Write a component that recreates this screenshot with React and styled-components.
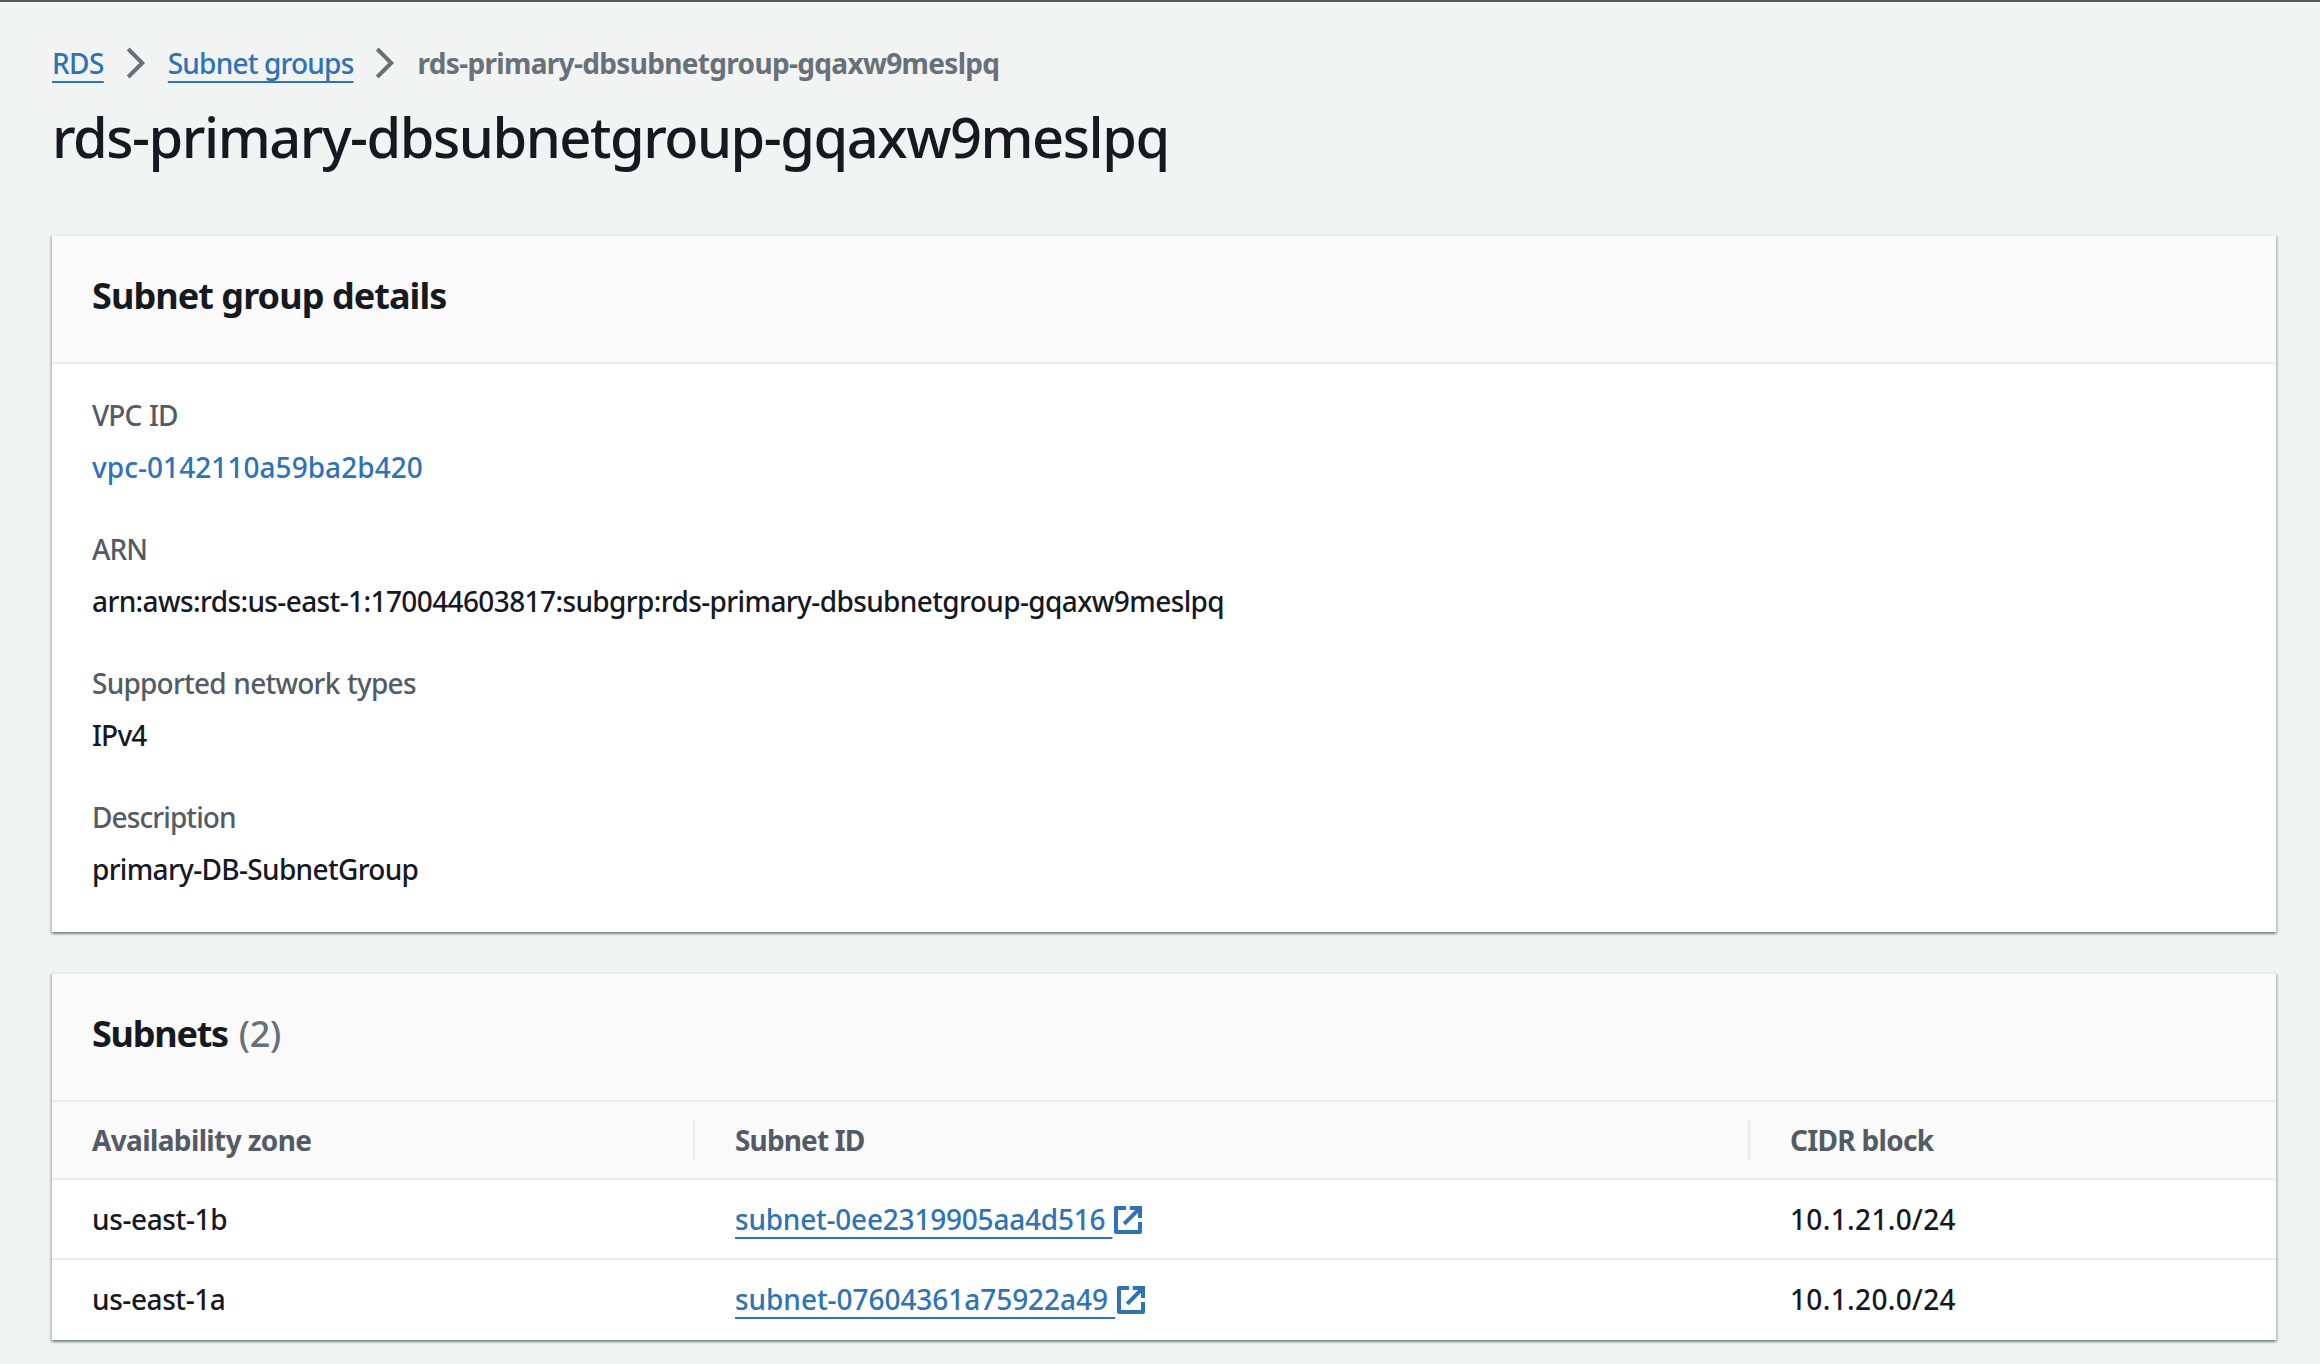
import React from 'react';
import styled, { createGlobalStyle } from 'styled-components';

const color = {
  page: '#f2f3f3',
  text: '#16191f',
  label: '#545b64',
  muted: '#687078',
  link: '#2e72b8',
  divider: '#eaeded',
  header: '#fafafa',
};

const GlobalStyle = createGlobalStyle`
  *, *::before, *::after { box-sizing: border-box; }
  body {
    margin: 0;
    background: ${color.page};
    color: ${color.text};
    font-family: "Noto Sans", "Open Sans", sans-serif;
    font-size: 28px;
    font-weight: 500;
    line-height: 44px;
  }
`;

const Page = styled.main`
  display: flex;
  flex-direction: column;
  min-height: 1364px;
  padding: 39px 44px 24px 52px;
  border-top: 2px solid #545b64;
`;

const Breadcrumbs = styled.nav`
  display: flex;
  align-items: center;
  gap: 16px;
  height: 44px;
  white-space: nowrap;
`;

const Link = styled.a`
  color: ${color.link};
  letter-spacing: ${(p) => p.$tracking || 0}px;
  text-decoration: ${(p) => (p.$plain ? 'none' : 'underline')};
  text-decoration-thickness: 2px;
  text-underline-offset: 7px;
  text-decoration-skip-ink: none;
`;

const Current = styled.span`
  color: ${color.muted};
  font-weight: 700;
  letter-spacing: -0.67px;
`;

const Icon = styled.svg`
  flex: none;
  width: 32px;
  height: 32px;
  fill: none;
  stroke: ${(p) => p.$color};
  stroke-width: 4;
`;

const ExternalIcon = styled(Icon)`
  margin-top: 2px;
`;

const Title = styled.h1`
  margin: 15px 0 62px;
  font-size: 56px;
  font-weight: 500;
  line-height: 72px;
  letter-spacing: -1.48px;
  white-space: nowrap;
`;

const Cards = styled.div`
  display: flex;
  flex-direction: column;
  gap: 40px;
`;

const Card = styled.section`
  width: 2224px;
  background: #fff;
  border-top: 2px solid ${color.divider};
  box-shadow:
    0 2px 2px 0 rgba(0, 28, 36, 0.3),
    2px 2px 2px 0 rgba(0, 28, 36, 0.15),
    -2px 2px 2px 0 rgba(0, 28, 36, 0.15);
`;

const CardHeader = styled.header`
  display: flex;
  align-items: baseline;
  gap: 11px;
  height: 128px;
  padding: 38px 40px 0;
  background: ${color.header};
  border-bottom: 2px solid ${color.divider};
`;

const Heading = styled.h2`
  margin: 0;
  font-size: 36px;
  font-weight: 700;
  line-height: 44px;
  letter-spacing: ${(p) => p.$tracking}px;
`;

const Count = styled.span`
  color: ${color.muted};
  font-size: 36px;
  line-height: 44px;
  letter-spacing: -0.3px;
`;

const Fields = styled.dl`
  display: flex;
  flex-direction: column;
  gap: 38px;
  margin: 0;
  padding: 29px 40px 41px;
`;

const Field = styled.div`
  display: flex;
  flex-direction: column;
  gap: 8px;
  align-items: flex-start;
`;

const Label = styled.dt`
  color: ${color.label};
  letter-spacing: ${(p) => p.$tracking}px;
  word-spacing: 1px;
`;

const Value = styled.dd`
  margin: 0;
  letter-spacing: ${(p) => p.$tracking}px;
`;

const Row = styled.div`
  display: grid;
  grid-template-columns: 643px 1055px 1fr;
  align-items: center;
  height: 80px;
  border-bottom: 2px solid ${(p) => (p.$last ? 'transparent' : color.divider)};
`;

const HeadRow = styled(Row)`
  height: 78px;
  background: ${color.header};
  color: ${color.label};
  font-weight: 700;
`;

const HeadCell = styled.div`
  display: flex;
  align-items: center;
  height: 40px;
  padding: 0 40px;
  letter-spacing: ${(p) => p.$tracking}px;
  border-right: ${(p) => (p.$last ? 'none' : `2px solid ${color.divider}`)};
`;

const Cell = styled.div`
  display: flex;
  align-items: center;
  padding: 0 40px;
  white-space: pre;
  letter-spacing: ${(p) => p.$tracking || 0}px;
`;

const Chevron = () => (
  <Icon viewBox="0 0 32 32" $color={color.muted} aria-hidden="true">
    <path d="M8.2 2l14 14-14 14" />
  </Icon>
);

const External = () => (
  <ExternalIcon viewBox="0 0 32 32" $color={color.link} aria-hidden="true">
    <path d="M14 4H4v24h24V18" strokeLinejoin="round" />
    <path d="M17.8 4H28v10M28 4L12.2 19.8" />
  </ExternalIcon>
);

const fields = [
  { label: 'VPC ID', lt: -0.85, value: 'vpc-0142110a59ba2b420', vt: 0.05, link: true },
  { label: 'ARN', lt: -0.95, value: 'arn:aws:rds:us-east-1:170044603817:subgrp:rds-primary-dbsubnetgroup-gqaxw9meslpq', vt: -0.61 },
  { label: 'Supported network types', lt: -0.77, value: 'IPv4', vt: -0.8 },
  { label: 'Description', lt: -0.9, value: 'primary-DB-SubnetGroup', vt: -0.67 },
];

const subnets = [
  { zone: 'us-east-1b', id: 'subnet-0ee2319905aa4d516', cidr: '10.1.21.0/24', tracking: -0.22, zoneTracking: -0.38 },
  { zone: 'us-east-1a', id: 'subnet-07604361a75922a49', cidr: '10.1.20.0/24', tracking: -0.05, zoneTracking: -0.42 },
];

export default function App() {
  return (
    <>
      <GlobalStyle />
      <Page>
        <Breadcrumbs>
          <Link $tracking={-0.6}>RDS</Link>
          <Chevron />
          <Link $tracking={-0.81}>Subnet groups</Link>
          <Chevron />
          <Current>rds-primary-dbsubnetgroup-gqaxw9meslpq</Current>
        </Breadcrumbs>
        <Title>rds-primary-dbsubnetgroup-gqaxw9meslpq</Title>
        <Cards>
          <Card>
            <CardHeader>
              <Heading $tracking={-0.93}>Subnet group details</Heading>
            </CardHeader>
            <Fields>
              {fields.map((f) => (
                <Field key={f.label}>
                  <Label $tracking={f.lt}>{f.label}</Label>
                  <Value $tracking={f.vt}>
                    {f.link ? <Link $plain $tracking={f.vt}>{f.value}</Link> : f.value}
                  </Value>
                </Field>
              ))}
            </Fields>
          </Card>
          <Card>
            <CardHeader>
              <Heading $tracking={-1.25}>Subnets</Heading>
              <Count>(2)</Count>
            </CardHeader>
            <HeadRow>
              <HeadCell $tracking={-0.63}>Availability zone</HeadCell>
              <HeadCell $tracking={-0.85}>Subnet ID</HeadCell>
              <HeadCell $tracking={-0.7} $last>CIDR block</HeadCell>
            </HeadRow>
            {subnets.map((s, i) => (
              <Row key={s.id} $last={i === subnets.length - 1}>
                <Cell $tracking={s.zoneTracking}>{s.zone}</Cell>
                <Cell>
                  <Link $tracking={s.tracking}>{s.id}{'\u00a0'}</Link>
                  <External />
                </Cell>
                <Cell $tracking={0.35}>{s.cidr}</Cell>
              </Row>
            ))}
          </Card>
        </Cards>
      </Page>
    </>
  );
}
